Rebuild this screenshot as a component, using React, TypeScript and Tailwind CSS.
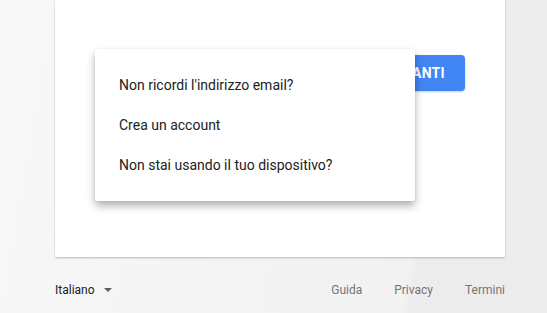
import React from 'react';

const menuItems = ["Non ricordi l'indirizzo email?", 'Crea un account', 'Non stai usando il tuo dispositivo?'];

export default function App() {
  return (
    <div className="h-[313px] w-full overflow-hidden bg-[linear-gradient(100deg,#f8f8f8_0%,#f4f4f4_40%,#f2f2f2_76%,#ededed_77%,#ececec_100%)] font-['Roboto',sans-serif]">
      <div className="ml-[55px] w-[450px]">
        {/* sign-in card, top cut off */}
        <div className="relative h-[257px] bg-white shadow-[0_1px_2px_rgba(0,0,0,0.25)]">
          <div className="flex justify-end pr-[40px] pt-[55px]">
            <button className="h-[36px] rounded-[4px] bg-[#4285f4] px-[20px] text-[14px] font-bold tracking-[0.3px] text-white shadow-[0_1px_2px_rgba(0,0,0,0.2)]">
              AVANTI
            </button>
          </div>

          {/* more options menu */}
          <div className="absolute left-[40px] top-[49px] w-[320px] rounded-[2px] bg-white py-[16px] shadow-[0_5px_9px_rgba(0,0,0,0.3),0_0_2px_rgba(0,0,0,0.08)]">
            {menuItems.map((item) => (
              <div key={item} className="flex h-[40px] items-center pl-[24px] text-[14px] text-[#212121]">
                {item}
              </div>
            ))}
          </div>
        </div>

        <div className="flex h-[66px] items-center justify-between text-[12px]">
          <div className="flex items-center gap-[9px] text-[#202124]">
            <span>Italiano</span>
            <svg width="8" height="4" viewBox="0 0 8 4">
              <path d="M0 0 L8 0 L4 4 Z" fill="#5f5f5f" />
            </svg>
          </div>
          <div className="flex items-center gap-[32px] text-[#757575]">
            <a>Guida</a>
            <a>Privacy</a>
            <a>Termini</a>
          </div>
        </div>
      </div>
    </div>
  );
}
